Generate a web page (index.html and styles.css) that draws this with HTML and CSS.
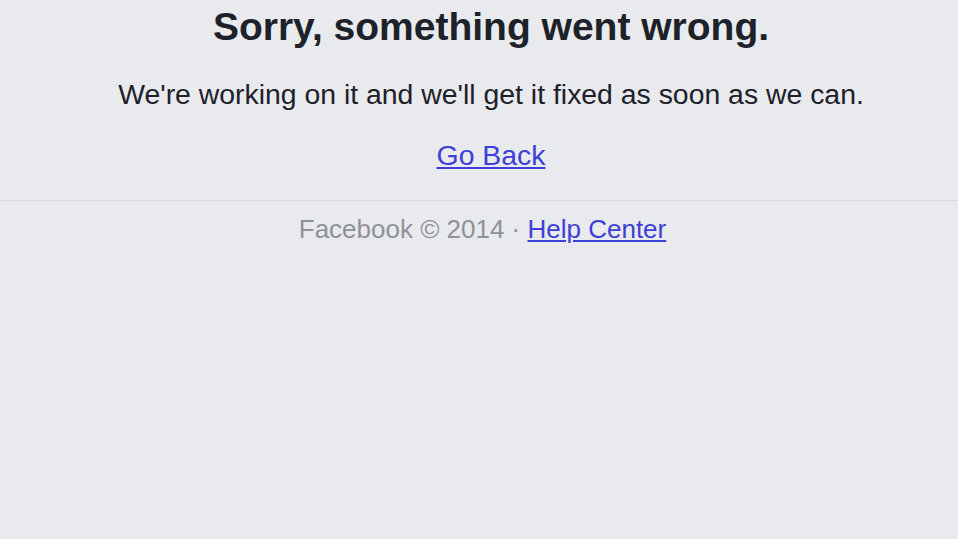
FILE: index.html
```html
<!DOCTYPE html>
<html lang="en">
<head>
    <meta charset="UTF-8">
    <title>Error</title>
    <link rel="stylesheet" href="styles.css">
</head>
<body>
    <div class="error">
        <h1>Sorry, something went wrong.</h1>
        <p>We're working on it and we'll get it fixed as soon as we can.</p>
        <a class="back" href="#">Go Back</a>
    </div>
    <div class="footer">
        Facebook © 2014 · <a href="#">Help Center</a>
    </div>
</body>
</html>
```

FILE: styles.css
```css
/* General */
body {
    font-family: 'Liberation Sans', Arial, sans-serif;
    background: #e9eaee;
    color: #1d2129;
    margin: 0;
    text-align: center;
}

a {
    color: #3c40d6;
    text-decoration: underline;
}

/* Error box */
.error {
    padding: 4px 0 28px 24px;
    border-bottom: 1px solid #d6d8dc;
}

h1 {
    font-size: 39px;
    font-weight: 700;
    margin: 0;
    line-height: 46px;
}

p {
    font-size: 28.4px;
    margin: 27px 0;
    line-height: 34px;
}

.back {
    font-size: 28.4px;
    line-height: 34px;
    display: inline-block;
}

/* Footer */
.footer {
    color: #8f9297;
    font-size: 26px;
    line-height: 30px;
    padding: 13px 0 0 7px;
}
```
